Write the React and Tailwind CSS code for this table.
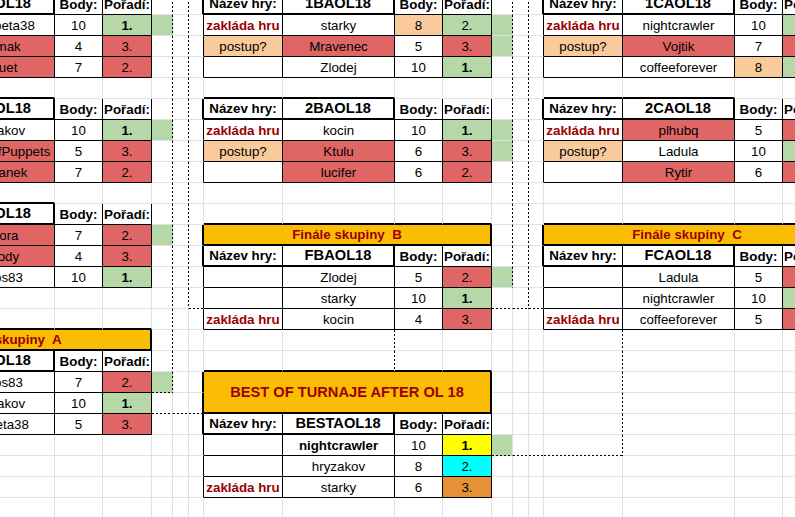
import clsx from "clsx";

// spreadsheet grid: 3 groups of 7 columns, 21px rows
const NROW = 26;
const NCOL = 21;

const BG = {
  red: "bg-[#e06666]",
  green: "bg-[#b6d7a8]",
  peach: "bg-[#f9cb9c]",
  orange: "bg-[#fbbc04]",
  yellow: "bg-[#ffff00]",
  cyan: "bg-[#00ffff]",
  amber: "bg-[#e69138]",
};

const TEXT = {
  n: "text-[13.33px] text-black",
  b: "text-[13.33px] font-bold text-black",
  h: "text-[14.67px] font-bold text-black",
  z: "text-[13.33px] font-bold text-[#990000]",
  t: "text-[14.67px] font-bold text-[#990000]",
};

const RIGHT = {
  g: "border-r border-r-[#e2e2e2]",
  b: "border-r border-r-black",
  B: "border-r-2 border-r-black",
  d: "border-r border-r-transparent",
};

const BOTTOM = {
  g: "border-b border-b-[#e2e2e2]",
  b: "border-b border-b-black",
  B: "border-b-2 border-b-black",
  d: "border-b border-b-transparent",
};

const DOTS = {
  r: "bg-[image:repeating-linear-gradient(to_bottom,#000_0_2px,transparent_2px_4px)] bg-[length:1px_100%] bg-right bg-no-repeat bg-origin-border",
  b: "bg-[image:repeating-linear-gradient(to_right,#000_0_2px,transparent_2px_4px)] bg-[length:100%_1px] bg-bottom bg-no-repeat bg-origin-border",
  rb: "[background-image:repeating-linear-gradient(to_bottom,#000_0_2px,transparent_2px_4px),repeating-linear-gradient(to_right,#000_0_2px,transparent_2px_4px)] [background-size:1px_100%,100%_1px] [background-position:right_top,left_bottom] bg-no-repeat bg-origin-border",
};

function buildSheet() {
  const cells = Array.from({ length: NROW }, () => Array.from({ length: NCOL }, () => ({})));
  const R = Array.from({ length: NROW }, () => Array(NCOL).fill("g"));
  const B = Array.from({ length: NROW }, () => Array(NCOL).fill("g"));
  const ok = (r, c) => r >= 0 && c >= 0 && r < NROW && c < NCOL;
  const setR = (r, c, v) => ok(r, c) && (R[r][c] = v);
  const setB = (r, c, v) => ok(r, c) && (B[r][c] = v);
  const put = (r, c, o) => ok(r, c) && Object.assign(cells[r][c], o);

  const groupLabels = [
    ["zakláda hru", null],
    ["postup?", "peach"],
    ["", null],
  ];
  const finalLabels = [
    ["", null],
    ["", null],
    ["zakláda hru", null],
  ];

  // rows: [name, nameBg, body, bodyBg, rank, rankBg, extraGreen, nameBold]
  function table(g, r0, title, rows, labels) {
    const L = 7 * g, N = L + 1, D = L + 2, P = L + 3, X = L + 4;
    put(r0, L, { text: "Název hry:", t: "b" });
    put(r0, N, { text: title, t: "h" });
    put(r0, D, { text: "Body:", t: "b" });
    put(r0, P, { text: "Pořadí:", t: "b" });
    setB(r0 - 1, L, "B");
    setB(r0 - 1, N, "B");
    setR(r0, L - 1, "B");
    setR(r0, L, "b");
    setR(r0, N, "B");
    setB(r0, L, "B");
    setB(r0, N, "B");
    setR(r0, D, "b");
    setR(r0, P, "b");
    setB(r0, D, "b");
    setB(r0, P, "b");

    rows.forEach((row, i) => {
      const r = r0 + 1 + i;
      const [name, nbg, body, bbg, rank, rbg, extra, nbold] = row;
      const [label, lbg] = labels[i];
      put(r, L, { text: label, bg: lbg, t: label === "zakláda hru" ? "z" : "n" });
      put(r, N, { text: name, bg: nbg, t: nbold ? "b" : "n" });
      put(r, D, { text: body, bg: bbg });
      put(r, P, { text: rank, bg: rbg, t: rank === "1." ? "b" : "n" });
      if (extra) put(r, X, { bg: "green" });
      setR(r, L - 1, "b");
      [L, N, D, P].forEach((c) => {
        setR(r, c, "b");
        setB(r, c, "b");
      });
    });
  }

  function banner(g, r, text, tall) {
    const L = 7 * g;
    put(r, L, { text, bg: "orange", t: tall ? "t" : "z", span: 4, rspan: tall ? 2 : 1 });
    for (let c = L; c < L + 4; c++) {
      setB(r - 1, c, "B");
      if (c > L) put(r, c, { skip: true });
      if (tall) put(r + 1, c, { skip: true });
    }
    setR(r, L - 1, "B");
    if (tall) setR(r + 1, L - 1, "B");
    setR(r, L, "B");
    setB(r, L, "B");
  }

  // skupina A
  table(0, 0, "1AAOL18", [
    ["Horalbeta38", null, "10", null, "1.", "green", true],
    ["Polmak", "red", "4", null, "3.", "red"],
    ["Kaluet", "red", "7", null, "2.", "red"],
  ], groupLabels);
  table(0, 5, "2AAOL18", [
    ["hryzakov", null, "10", null, "1.", "green", true],
    ["MasterOfPuppets", "red", "5", null, "3.", "red"],
    ["Dobranek", "red", "7", null, "2.", "red"],
  ], groupLabels);
  table(0, 10, "3AAOL18", [
    ["Aurora", "red", "7", null, "2.", "red", true],
    ["Woody", "red", "4", null, "3.", "red"],
    ["Amos83", null, "10", null, "1.", "green"],
  ], groupLabels);
  banner(0, 16, "Finále skupiny  A");
  table(0, 17, "FAAOL18", [
    ["Amos83", null, "7", null, "2.", "red", true],
    ["hryzakov", null, "10", null, "1.", "green"],
    ["Kometa38", null, "5", null, "3.", "red"],
  ], finalLabels);

  // skupina B
  table(1, 0, "1BAOL18", [
    ["starky", null, "8", "peach", "2.", "green", true],
    ["Mravenec", "red", "5", null, "3.", "red", true],
    ["Zlodej", null, "10", null, "1.", "green"],
  ], groupLabels);
  table(1, 5, "2BAOL18", [
    ["kocin", null, "10", null, "1.", "green", true],
    ["Ktulu", "red", "6", null, "3.", "red", true],
    ["lucifer", "red", "6", null, "2.", "red"],
  ], groupLabels);
  banner(1, 11, "Finále skupiny  B");
  table(1, 12, "FBAOL18", [
    ["Zlodej", null, "5", null, "2.", "red", true],
    ["starky", null, "10", null, "1.", "green"],
    ["kocin", null, "4", null, "3.", "red"],
  ], finalLabels);

  // skupina C
  table(2, 0, "1CAOL18", [
    ["nightcrawler", null, "10", null, "1.", "green"],
    ["Vojtik", "red", "7", null, "3.", "red"],
    ["coffeeforever", null, "8", "peach", "2.", "green"],
  ], groupLabels);
  table(2, 5, "2CAOL18", [
    ["plhubq", "red", "5", null, "3.", "red"],
    ["Ladula", null, "10", null, "1.", "green"],
    ["Rytir", "red", "6", null, "2.", "red"],
  ], groupLabels);
  banner(2, 11, "Finále skupiny  C");
  table(2, 12, "FCAOL18", [
    ["Ladula", null, "5", null, "2.", "red"],
    ["nightcrawler", null, "10", null, "1.", "green"],
    ["coffeeforever", null, "5", null, "3.", "red"],
  ], finalLabels);

  // best of
  banner(1, 18, "BEST OF TURNAJE AFTER OL 18", true);
  table(1, 20, "BESTAOL18", [
    ["nightcrawler", null, "10", null, "1.", "yellow", true, true],
    ["hryzakov", null, "8", null, "2.", "cyan"],
    ["starky", null, "6", null, "3.", "amber"],
  ], finalLabels);

  // bracket connectors (dotted)
  for (let r = 0; r <= 18; r++) setR(r, 4, "d");
  for (let r = 0; r <= 14; r++) setR(r, 5, "d");
  setB(18, 4, "d");
  setB(14, 6, "d");
  [4, 5, 6].forEach((c) => setB(19, c, "d"));

  for (let r = 0; r <= 13; r++) setR(r, 11, "d");
  for (let r = 0; r <= 14; r++) setR(r, 12, "d");
  [11, 12, 13].forEach((c) => setB(14, c, "d"));

  setR(16, 8, "d");
  setR(17, 8, "d");
  for (let r = 16; r <= 21; r++) setR(r, 14, "d");
  [11, 12, 13, 14].forEach((c) => setB(21, c, "d"));

  return { cells, R, B };
}

const sheet = buildSheet();

export default function App() {
  const { cells, R, B } = sheet;
  return (
    <div className="w-[795px] h-[517px] overflow-hidden bg-white font-['Liberation_Sans',Arial,sans-serif]">
      <div className="grid w-[1020px] grid-cols-[repeat(3,79px_112px_48px_49px_21px_16px_15px)] auto-rows-[21px] -ml-[136px] -mt-[6px]">
        {cells.map((row, r) =>
          row.map((cell, c) => {
            if (cell.skip) return null;
            const rd = R[r][c] === "d";
            const bd = B[r][c] === "d";
            return (
              <div
                key={`${r}-${c}`}
                className={clsx(
                  "flex items-center justify-center whitespace-pre leading-[15px]",
                  RIGHT[R[r][c]],
                  BOTTOM[B[r][c]],
                  cell.bg && BG[cell.bg],
                  TEXT[cell.t || "n"],
                  rd && bd ? DOTS.rb : rd ? DOTS.r : bd ? DOTS.b : null,
                  cell.span === 4 && "col-span-4",
                  cell.rspan === 2 && "row-span-2"
                )}
              >
                {cell.text}
              </div>
            );
          })
        )}
      </div>
    </div>
  );
}
